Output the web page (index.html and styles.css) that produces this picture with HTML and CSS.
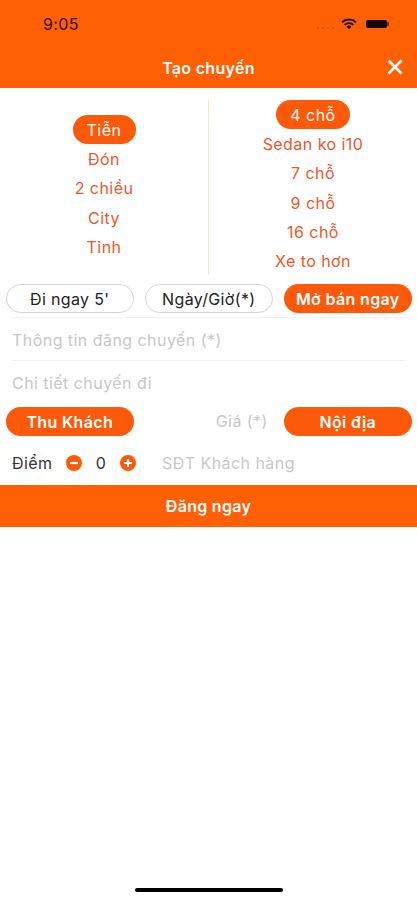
FILE: index.html
```html
<!DOCTYPE html>
<html lang="vi">
<head>
    <meta charset="UTF-8">
    <meta name="viewport" content="width=device-width, initial-scale=1.0">
    <title>Tạo chuyến</title>
    <link rel="stylesheet" href="styles.css">
</head>
<body>
    <div class="screen">
        <div class="header">
            <div class="status-bar">
                <span class="time">9:05</span>
                <div class="status-icons">
                    <div class="signal">
                        <i></i><i></i><i></i><i></i>
                    </div>
                    <svg class="wifi" width="16" height="12" viewBox="0 0 17 13">
                        <path d="M1 4.600a11 11 0 0 1 15 0" fill="none" stroke="#1c0d00" stroke-width="2"/>
                        <path d="M3.700 7.400a7 7 0 0 1 9.600 0" fill="none" stroke="#1c0d00" stroke-width="2"/>
                        <path d="M5.900 9.400a3.800 3.800 0 0 1 5.200 0L8.500 12.300z" fill="#1c0d00"/>
                    </svg>
                    <div class="battery"></div>
                    <div class="battery-tip"></div>
                </div>
            </div>
            <div class="title-bar">
                <span class="title">Tạo chuyến</span>
                <svg class="close" width="18" height="18" viewBox="0 0 18 18">
                    <path d="M2.500 2.500L15.500 15.500M15.500 2.500L2.500 15.500" stroke="#fff" stroke-width="2.600" fill="none"/>
                </svg>
            </div>
        </div>

        <div class="options">
            <div class="option-col left-col">
                <span class="option active">Tiễn</span>
                <span class="option">Đón</span>
                <span class="option">2 chiều</span>
                <span class="option">City</span>
                <span class="option">Tỉnh</span>
            </div>
            <div class="option-col right-col">
                <span class="option active wide">4 chỗ</span>
                <span class="option">Sedan ko i10</span>
                <span class="option">7 chỗ</span>
                <span class="option">9 chỗ</span>
                <span class="option">16 chỗ</span>
                <span class="option">Xe to hơn</span>
            </div>
        </div>

        <div class="pill-row">
            <button class="pill outline">Đi ngay 5'</button>
            <button class="pill outline">Ngày/Giờ(*)</button>
            <button class="pill filled">Mở bán ngay</button>
        </div>

        <div class="field first-field">Thông tin đăng chuyến (*)</div>
        <div class="field">Chi tiết chuyến đi</div>

        <div class="pill-row price-row">
            <button class="pill filled">Thu Khách</button>
            <span class="price-label">Giá (*)</span>
            <button class="pill filled">Nội địa</button>
        </div>

        <div class="score-row">
            <span class="score-label">Điểm</span>
            <svg class="round-btn" width="16" height="16" viewBox="0 0 16 16">
                <circle cx="8" cy="8" r="8" fill="#fc5a0a"/>
                <path d="M4 8H12" stroke="#fff" stroke-width="2.200"/>
            </svg>
            <span class="score-value">0</span>
            <svg class="round-btn" width="16" height="16" viewBox="0 0 16 16">
                <circle cx="8" cy="8" r="8" fill="#fc5a0a"/>
                <path d="M4 8H12M8 4V12" stroke="#fff" stroke-width="2.200"/>
            </svg>
            <span class="phone">SĐT Khách hàng</span>
        </div>

        <div class="submit">Đăng ngay</div>

        <div class="home-bar"></div>
    </div>
</body>
</html>
```

FILE: styles.css
```css
* {
    box-sizing: border-box;
}
body {
    margin: 0;
    background: #fff;
    font-family: Inter, "Noto Sans", sans-serif;
    font-size: 16px;
    letter-spacing: 0.45px;
}
.screen {
    display: flex;
    flex-direction: column;
    height: 900px;
    overflow: hidden;
}
.header {
    height: 88px;
    background: #ff5f05;
}
.status-bar {
    display: flex;
    justify-content: space-between;
    align-items: center;
    height: 48px;
    padding: 0 28px 0 43px;
}
.time {
    color: #2a1200;
    font-size: 16px;
    letter-spacing: 0.4px;
}
.status-icons {
    display: flex;
    align-items: center;
}
.signal {
    display: flex;
    align-items: flex-end;
    gap: 3px;
    height: 10px;
    margin-right: 7px;
}
.signal i {
    width: 2px;
    height: 2px;
    background: #d9540a;
}
.wifi {
    margin-right: 9px;
}
.battery {
    width: 21px;
    height: 8px;
    background: #140800;
    border-radius: 2px;
}
.battery-tip {
    width: 2px;
    height: 4px;
    background: #7a3300;
}
.title-bar {
    display: flex;
    justify-content: center;
    align-items: center;
    position: relative;
    height: 40px;
}
.title {
    color: #fff;
    font-weight: 600;
    letter-spacing: 0.3px;
}
.close {
    position: absolute;
    right: 13px;
    top: 10px;
}
.options {
    display: flex;
    height: 187px;
    padding-top: 12px;
}
.option-col {
    display: flex;
    flex-direction: column;
    align-items: center;
    flex: 1;
}
.left-col {
    padding-top: 15px;
    border-right: 1px solid #fbe3d8;
}
.option {
    height: 29.300px;
    line-height: 31px;
    color: #f0562a;
}
.option.active {
    width: 63px;
    height: 29px;
    line-height: 30px;
    text-align: center;
    color: #fff;
    background: #fc5a0a;
    border-radius: 15px;
}
.option.wide {
    width: 74px;
}
.pill-row {
    display: flex;
    justify-content: space-between;
    padding: 9px 5.500px 0 6px;
}
.pill {
    width: 127.500px;
    height: 29px;
    padding: 0;
    border-radius: 15px;
    font-family: inherit;
    font-size: 16px;
    letter-spacing: 0.35px;
}
.pill.outline {
    background: #fff;
    border: 1px solid #d4d4d4;
    color: #222;
}
.pill.filled {
    background: #fc5a0a;
    border: none;
    color: #fff;
    font-weight: 600;
}
.field {
    height: 44px;
    margin: 0 12px;
    line-height: 45px;
    color: #c8c8c8;
    border-bottom: 1px solid #f2f2f2;
}
.first-field {
    margin-top: 4px;
    border-top: 1px solid #f2f2f2;
}
.field:not(.first-field) {
    border-bottom: none;
}
.price-row {
    align-items: center;
    padding-top: 2px;
}
.price-label {
    color: #c8c8c8;
    margin-left: 66px;
    margin-bottom: 2px;
    flex: 1;
    text-align: center;
}
.score-row {
    display: flex;
    align-items: center;
    height: 49px;
    padding: 5px 12px 0;
}
.score-label {
    width: 54px;
    color: #333;
}
.score-value {
    width: 38px;
    text-align: center;
    color: #333;
}
.phone {
    margin-left: 26px;
    color: #c8c8c8;
}
.submit {
    height: 42px;
    line-height: 42px;
    background: #ff5f05;
    color: #fff;
    text-align: center;
    font-weight: 600;
    letter-spacing: 0.3px;
}
.home-bar {
    align-self: center;
    width: 148px;
    height: 4px;
    margin-top: auto;
    margin-bottom: 8px;
    background: #000;
    border-radius: 2px;
}
```
